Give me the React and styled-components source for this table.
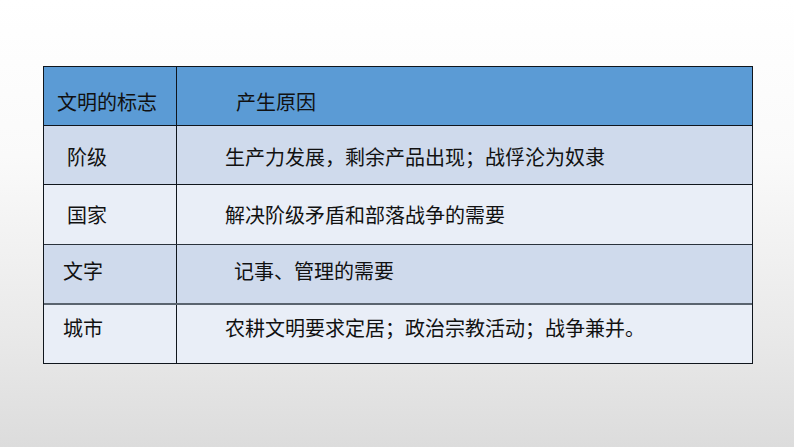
import React from 'react'
import styled, { createGlobalStyle } from 'styled-components'

const GlobalStyle = createGlobalStyle`
  html, body {
    margin: 0;
    padding: 0;
  }
  body {
    font-family: "Noto Sans CJK SC", "Noto Sans", sans-serif;
  }
`

const Slide = styled.div`
  width: 794px;
  height: 447px;
  box-sizing: border-box;
  padding: 66px 0 0 43px;
  background: linear-gradient(to bottom, #ffffff 0%, #fafafa 35%, #e9e9e9 75%, #dcdcdc 100%);
  overflow: hidden;
`

const Table = styled.div`
  width: 708px;
  border: 1px solid #10161d;
`

const Row = styled.div`
  display: grid;
  grid-template-columns: 132px 1fr;
  height: ${p => p.$h}px;
  background: ${p => p.$bg};
  border-top: ${p => (p.$first ? 'none' : `${p.$line}px solid ${p.$lineColor}`)};
  box-sizing: border-box;
`

const Cell = styled.div`
  padding-top: ${p => p.$top}px;
  padding-left: ${p => p.$left}px;
  font-size: 20px;
  line-height: 24px;
  color: #111;
  white-space: nowrap;
  & + & {
    border-left: 1px solid #10161d;
  }
`

const rows = [
  { name: '文明的标志', reason: '产生原因', h: 58, bg: '#5b9bd5', top: 23, l1: 13, l2: 59, first: true },
  { name: '阶级', reason: '生产力发展，剩余产品出现；战俘沦为奴隶', h: 59, bg: '#cfdaec', top: 19, l1: 23, l2: 48, line: 1, lc: '#10161d' },
  { name: '国家', reason: '解决阶级矛盾和部落战争的需要', h: 60, bg: '#e9eef7', top: 18, l1: 23, l2: 48, line: 1, lc: '#10161d' },
  { name: '文字', reason: '记事、管理的需要', h: 59, bg: '#cfdaec', top: 14, l1: 19, l2: 57, line: 1, lc: '#2a323c' },
  { name: '城市', reason: '农耕文明要求定居；政治宗教活动；战争兼并。', h: 60, bg: '#e9eef7', top: 11, l1: 19, l2: 48, line: 2, lc: '#5a646f' },
]

const App = () => (
  <>
    <GlobalStyle />
    <Slide>
      <Table>
        {rows.map((r, i) => (
          <Row key={i} $h={r.h} $bg={r.bg} $first={r.first} $line={r.line} $lineColor={r.lc}>
            <Cell $top={r.top} $left={r.l1}>{r.name}</Cell>
            <Cell $top={r.top} $left={r.l2}>{r.reason}</Cell>
          </Row>
        ))}
      </Table>
    </Slide>
  </>
)

export default App
